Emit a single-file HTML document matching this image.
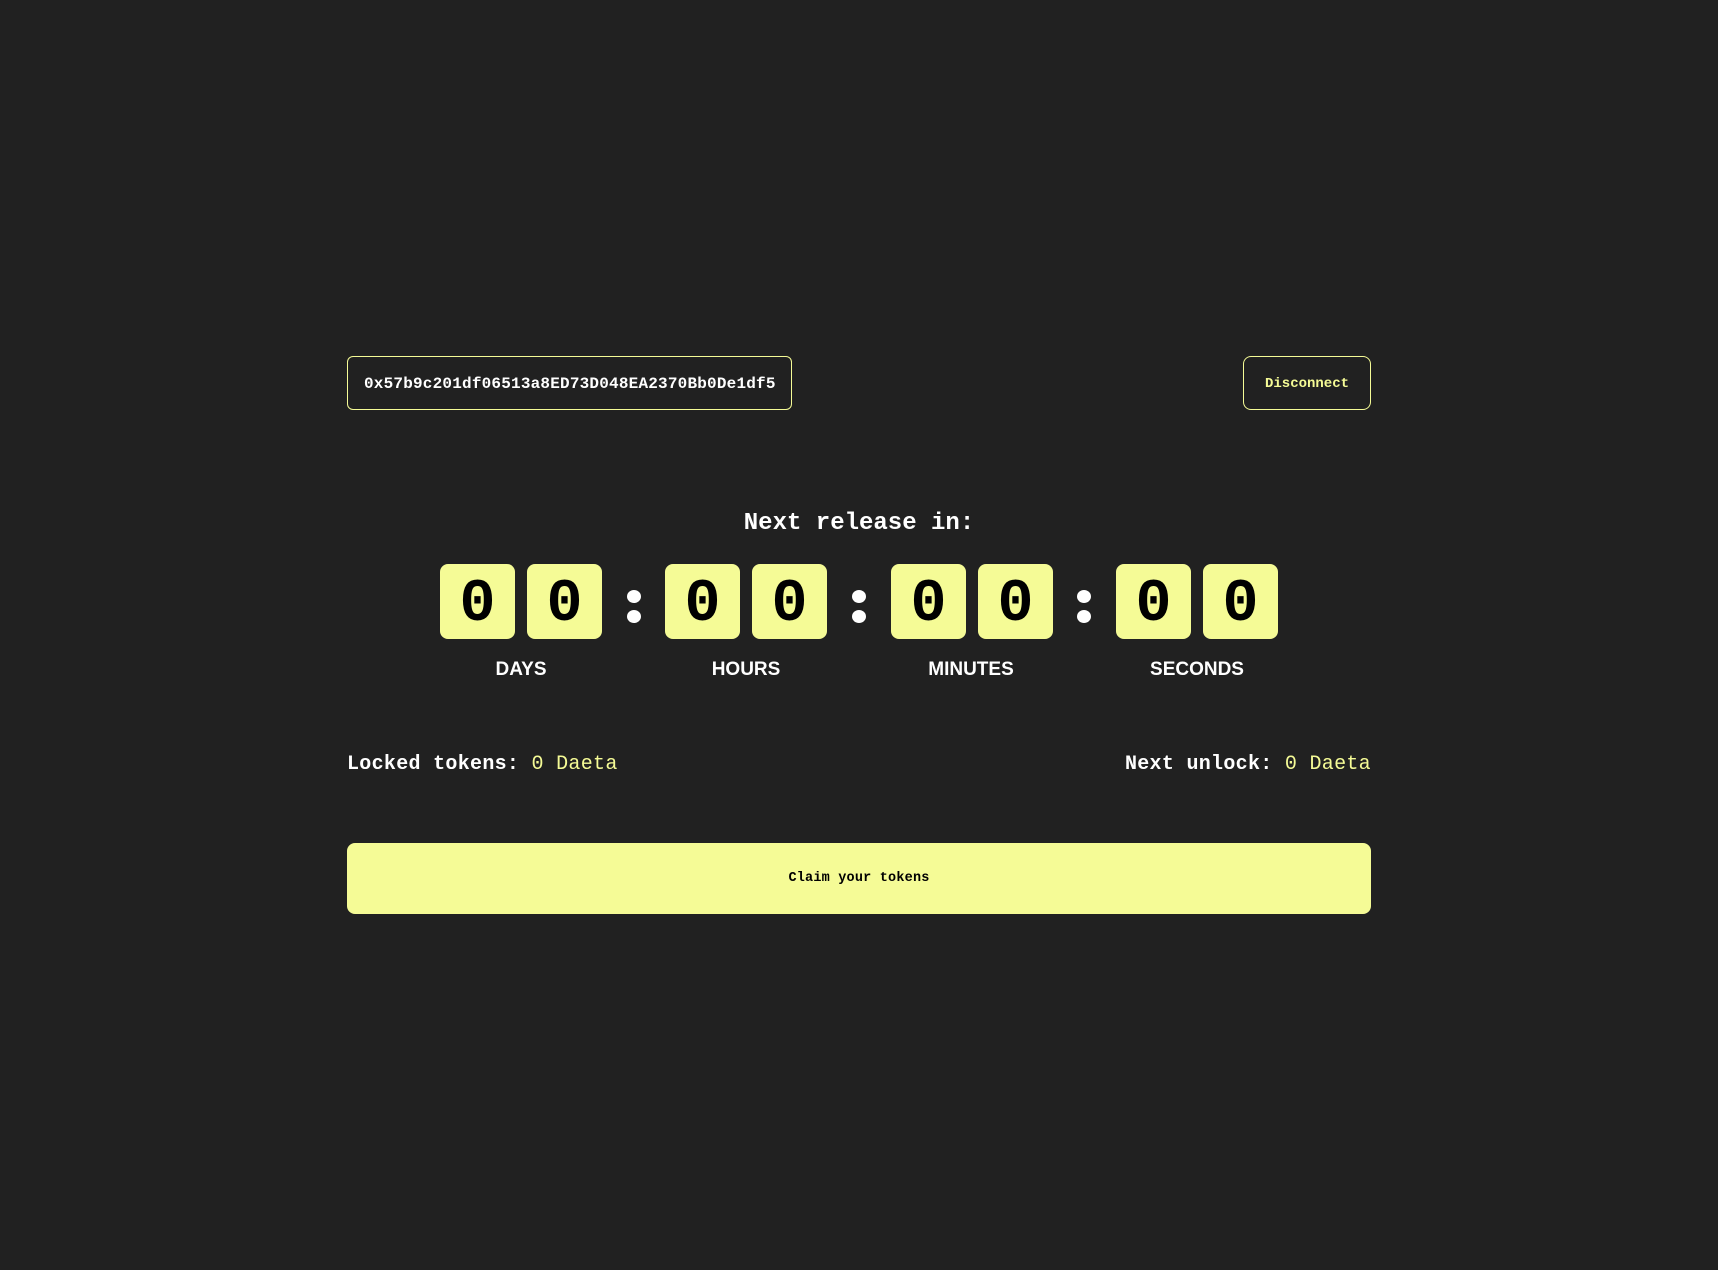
<!DOCTYPE html>
<html><head><meta charset="utf-8"><style>
*{margin:0;padding:0;box-sizing:border-box}
body{width:1718px;height:1270px;background:#212121;position:relative;overflow:hidden;font-family:"Liberation Mono",monospace;color:#fff}
.abs{position:absolute}
.addr{left:347px;top:356px;width:445px;height:54px;border:1px solid #f5fb96;border-radius:6px;font-weight:bold;font-size:16px;letter-spacing:0.2px;line-height:54px;padding-left:16px;white-space:nowrap}
.disc{left:1243px;top:356px;width:128px;height:54px;border:1px solid #f5fb96;border-radius:8px;color:#f5fb96;font-weight:bold;font-size:14px;line-height:54px;text-align:center}
.title{left:0;width:1718px;top:507px;text-align:center;font-size:24px;font-weight:bold;line-height:34px}
.box{top:564px;width:75px;height:75px;background:#f5fb96;border-radius:8px;color:#000;font-size:60px;font-weight:bold;text-align:center;line-height:82px}
.dot{width:14px;height:13px;background:#fff;border-radius:50%}
.lbl{top:658px;width:200px;text-align:center;font-family:"Liberation Sans",sans-serif;font-weight:bold;font-size:19px;line-height:24px}
.row{top:751px;font-size:20px;font-weight:bold;line-height:28px;letter-spacing:0.3px;white-space:nowrap}
.row span{color:#f5fb96;font-weight:normal}
.claim{left:347px;top:843px;width:1024px;height:71px;background:#f5fb96;border-radius:8px;color:#000;font-weight:bold;font-size:13.5px;letter-spacing:0.2px;text-align:center;line-height:71px}
</style></head><body>
<div class="abs addr">0x57b9c201df06513a8ED73D048EA2370Bb0De1df5</div>
<div class="abs disc">Disconnect</div>
<div class="abs title">Next release in:</div>

<div class="abs box" style="left:440px">0</div>
<div class="abs box" style="left:527px">0</div>
<div class="abs dot" style="left:627px;top:590px"></div><div class="abs dot" style="left:627px;top:610px"></div>
<div class="abs box" style="left:665px">0</div>
<div class="abs box" style="left:752px">0</div>
<div class="abs dot" style="left:852px;top:590px"></div><div class="abs dot" style="left:852px;top:610px"></div>
<div class="abs box" style="left:891px">0</div>
<div class="abs box" style="left:978px">0</div>
<div class="abs dot" style="left:1077px;top:590px"></div><div class="abs dot" style="left:1077px;top:610px"></div>
<div class="abs box" style="left:1116px">0</div>
<div class="abs box" style="left:1203px">0</div>

<div class="abs lbl" style="left:421px">DAYS</div>
<div class="abs lbl" style="left:646px">HOURS</div>
<div class="abs lbl" style="left:871px">MINUTES</div>
<div class="abs lbl" style="left:1097px">SECONDS</div>

<div class="abs row" style="left:347px">Locked tokens: <span>0 Daeta</span></div>
<div class="abs row" style="right:347px">Next unlock: <span>0 Daeta</span></div>

<div class="abs claim">Claim your tokens</div>
</body></html>
